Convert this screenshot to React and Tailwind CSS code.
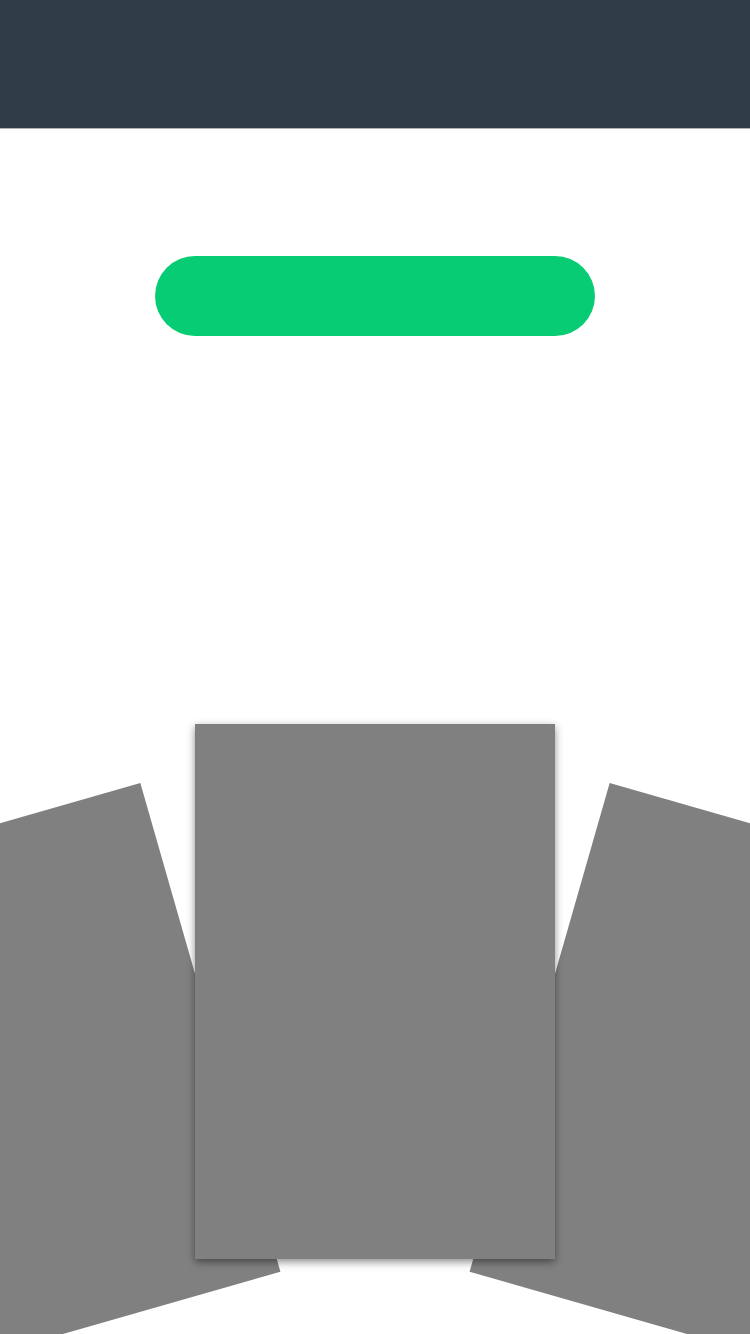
function SideCard({ side }) {
  const pos =
    side === "left"
      ? "left-[-134px] rotate-[-16deg]"
      : "right-[-134px] rotate-[16deg]";
  return (
    <div
      className={`absolute top-[83px] w-[360px] h-[535px] scale-95 bg-[#808080] ${pos}`}
    />
  );
}

export default function App() {
  return (
    <div className="relative w-full h-[1334px] overflow-hidden bg-white font-['Roboto',sans-serif]">
      <header className="h-[129px] bg-[#2f3e46] border-b border-[#b3b3b3]" />

      <div className="flex justify-center mt-[127px]">
        <button className="w-[440px] h-[80px] rounded-full bg-[#07cc73]" />
      </div>

      <div className="relative mt-[388px] h-[610px]">
        <SideCard side="left" />
        <SideCard side="right" />
        <div className="relative z-10 mx-auto w-[360px] h-[535px] bg-[#808080] shadow-[0_3px_8px_rgba(0,0,0,0.45)]" />
      </div>
    </div>
  );
}
